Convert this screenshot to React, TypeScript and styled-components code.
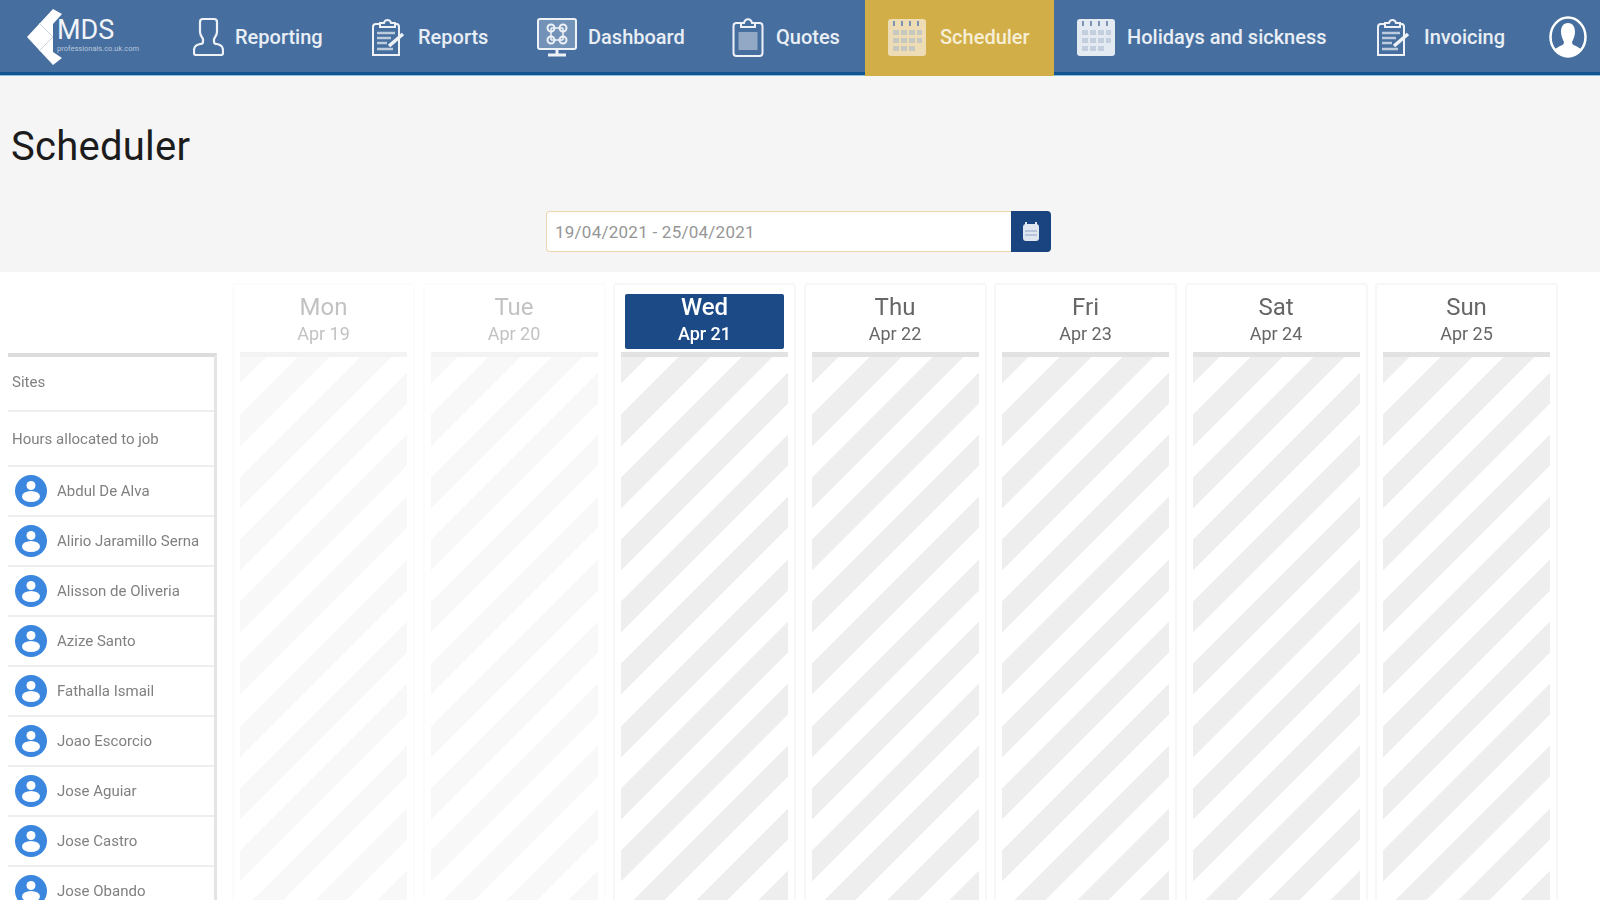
import React from "react";
import styled, { createGlobalStyle } from "styled-components";

const GlobalStyle = createGlobalStyle`
  html, body {
    margin: 0;
    height: 900px;
    overflow: hidden;
    background: #ffffff;
    font-family: Roboto, "Liberation Sans", sans-serif;
  }
  * {
    box-sizing: border-box;
  }
`;

const ReportingIcon = () => (
  <svg width="31" height="39" viewBox="0 0 31 39" fill="none" stroke="#eef2f7" strokeWidth="2.2">
    <path d="M10 2h11c2 0 3 1 3 3v10c0 3-2 5-3 7v3c0 1 1 2 3 2l3 1c2 1 3 3 3 5v3c0 2-1 2-2 2H3c-2 0-2-1-2-2v-3c0-2 1-4 3-5l3-1c2 0 3-1 3-2v-3c-1-2-3-4-3-7V5c0-2 1-3 3-3z" />
  </svg>
);

const ClipboardPenIcon = () => (
  <svg width="38" height="40" viewBox="0 0 38 40" fill="none" stroke="#eef2f7" strokeWidth="2">
    <path d="M10 7h18a3 3 0 0 1 2 3v28H4V10a3 3 0 0 1 3-3z" />
    <path d="M11 10V6h4c1-4 6-4 7 0h4v4z" fill="#466fa0" />
    <path d="M8 16h18M8 21h14M8 26h10M8 32h16" strokeWidth="2.5" opacity="0.7" />
    <path d="M20 29l14-12" strokeWidth="3.5" />
  </svg>
);

const DashboardIcon = () => (
  <svg width="40" height="40" viewBox="0 0 40 40" fill="none" stroke="#eef2f7" strokeWidth="2">
    <rect x="1" y="2" width="38" height="30" rx="2" fill="#c9d4e3" fillOpacity="0.35" />
    <path d="M20 32v5M11 38h18" strokeWidth="3" />
    <circle cx="14" cy="11" r="3.5" />
    <circle cx="26" cy="11" r="3.5" />
    <circle cx="14" cy="23" r="3.5" />
    <circle cx="26" cy="23" r="3.5" />
    <path d="M14 11h12M14 23h12M14 11v12M26 11v12" strokeWidth="1.5" />
  </svg>
);

const QuotesIcon = () => (
  <svg width="32" height="40" viewBox="0 0 32 40" fill="none" stroke="#eef2f7" strokeWidth="2">
    <rect x="1.5" y="6" width="29" height="33" rx="3" />
    <path d="M9 10V6h3c1-5 7-5 8 0h3v4z" fill="#466fa0" />
    <rect x="6.5" y="15" width="19" height="18" fill="#c4cfde" fillOpacity="0.6" stroke="none" />
  </svg>
);

const CalendarIcon = ({ fill }: { fill: string }) => (
  <svg width="40" height="40" viewBox="0 0 40 40">
    <rect x="1" y="2" width="38" height="37" rx="3" fill={fill} />
    <g fill="#a9b8cf" opacity="0.55">
      <rect x="6" y="13" width="6" height="5" />
      <rect x="14" y="13" width="6" height="5" />
      <rect x="22" y="13" width="6" height="5" />
      <rect x="30" y="13" width="5" height="5" />
      <rect x="6" y="21" width="6" height="5" />
      <rect x="14" y="21" width="6" height="5" />
      <rect x="22" y="21" width="6" height="5" />
      <rect x="30" y="21" width="5" height="5" />
      <rect x="6" y="29" width="6" height="5" />
      <rect x="14" y="29" width="6" height="5" />
      <rect x="22" y="29" width="6" height="5" />
    </g>
    <g fill="#7d93b5">
      <rect x="6" y="4" width="2" height="5" />
      <rect x="14" y="4" width="2" height="5" />
      <rect x="22" y="4" width="2" height="5" />
      <rect x="30" y="4" width="2" height="5" />
    </g>
  </svg>
);

const ProfileIcon = () => (
  <svg width="38" height="42" viewBox="0 0 38 42">
    <ellipse cx="19" cy="21" rx="17.5" ry="19.5" fill="none" stroke="#fff" strokeWidth="2.5" />
    <path
      d="M19 7c5 0 7 4 7 9 0 4-2 8-3 10 0 2 1 3 4 4l5 3c-3 5-8 7-13 7s-10-2-13-7l5-3c3-1 4-2 4-4-1-2-3-6-3-10 0-5 2-9 7-9z"
      fill="#fff"
    />
  </svg>
);

const AvatarIcon = () => (
  <svg width="32" height="32" viewBox="0 0 32 32">
    <circle cx="16" cy="16" r="16" fill="#3b86de" />
    <circle cx="16" cy="10.5" r="4.5" fill="#fff" />
    <ellipse cx="16" cy="21.5" rx="9" ry="5.5" fill="#fff" />
  </svg>
);

const navItems = [
  { label: "Reporting", icon: <ReportingIcon />, width: 176, slot: 42 },
  { label: "Reports", icon: <ClipboardPenIcon />, width: 168, slot: 49 },
  { label: "Dashboard", icon: <DashboardIcon />, width: 195, slot: 51 },
  { label: "Quotes", icon: <QuotesIcon />, width: 155, slot: 44 },
  { label: "Scheduler", icon: <CalendarIcon fill="#eedcb4" />, width: 189, slot: 53, active: true },
  { label: "Holidays and sickness", icon: <CalendarIcon fill="#e4eaf2" />, width: 298, slot: 51 },
  { label: "Invoicing", icon: <ClipboardPenIcon />, width: 170, slot: 50 },
];

const people = [
  "Abdul De Alva",
  "Alirio Jaramillo Serna",
  "Alisson de Oliveria",
  "Azize Santo",
  "Fathalla Ismail",
  "Joao Escorcio",
  "Jose Aguiar",
  "Jose Castro",
  "Jose Obando",
];

const days = [
  { name: "Mon", date: "Apr 19", past: true },
  { name: "Tue", date: "Apr 20", past: true },
  { name: "Wed", date: "Apr 21", today: true },
  { name: "Thu", date: "Apr 22" },
  { name: "Fri", date: "Apr 23" },
  { name: "Sat", date: "Apr 24" },
  { name: "Sun", date: "Apr 25" },
];

const App: React.FC = () => {
  return (
    <Page>
      <GlobalStyle />
      <Header>
        <Logo>
          <svg width="36" height="58" viewBox="0 0 36 58">
            <path d="M0 28L26 0l9 5-9 10v28l9 6-9 7z" fill="#fff" />
            <path d="M12 14l14 14M12 42l14-14" stroke="#c9d3e0" strokeWidth="1" />
          </svg>
          <LogoText>
            <LogoName>MDS</LogoName>
            <LogoTag>professionals.co.uk.com</LogoTag>
          </LogoText>
        </Logo>
        {navItems.map((item) => (
          <NavItem key={item.label} $width={item.width} $active={item.active}>
            <NavIcon $slot={item.slot}>{item.icon}</NavIcon>
            {item.label}
          </NavItem>
        ))}
        <Profile>
          <ProfileIcon />
        </Profile>
      </Header>

      <TopSection>
        <Title>Scheduler</Title>
        <DateRow>
          <DateInput>19/04/2021 - 25/04/2021</DateInput>
          <DateButton>
            <svg width="18" height="20" viewBox="0 0 18 20">
              <rect x="1" y="2" width="16" height="17" rx="3" fill="#dfe6f0" />
              <rect x="3" y="0" width="2" height="4" fill="#dfe6f0" />
              <rect x="13" y="0" width="2" height="4" fill="#dfe6f0" />
              <path d="M3 9h12M3 13h12" stroke="#8ea3c2" strokeWidth="1" />
            </svg>
          </DateButton>
        </DateRow>
      </TopSection>

      <Board>
        <Sidebar>
          <SideTable>
            <LabelRow>Sites</LabelRow>
            <LabelRow>Hours allocated to job</LabelRow>
            {people.map((name) => (
              <PersonRow key={name}>
                <AvatarIcon />
                {name}
              </PersonRow>
            ))}
          </SideTable>
        </Sidebar>
        <Days>
          {days.map((day) => (
            <DayCard key={day.name} $past={day.past}>
              <DayHead $today={day.today}>
                <DayName>{day.name}</DayName>
                <DayDate>{day.date}</DayDate>
              </DayHead>
              <DayBody />
            </DayCard>
          ))}
        </Days>
      </Board>
    </Page>
  );
};

const Page = styled.div`
  width: 1600px;
  height: 900px;
  overflow: hidden;
  filter: blur(0.7px);
`;

const Header = styled.header`
  display: flex;
  height: 76px;
  background: #466fa0;
  border-bottom: 1px solid #8fbfe6;
  box-shadow: inset 0 -3px 0 #10558f;
`;

const Logo = styled.div`
  display: flex;
  flex: none;
  width: 171px;
  padding: 9px 0 0 27px;
`;

const LogoText = styled.div`
  display: flex;
  flex-direction: column;
  margin-left: -6px;
`;

const LogoName = styled.span`
  color: #f1f4f8;
  font-size: 27px;
  font-weight: 400;
  line-height: 30px;
  margin-top: 6px;
`;

const LogoTag = styled.span`
  color: #b9c7da;
  font-size: 7.5px;
  line-height: 8px;
  white-space: nowrap;
`;

const NavItem = styled.div<{ $width: number; $active?: boolean }>`
  display: flex;
  align-items: center;
  flex: none;
  width: ${(p) => p.$width}px;
  height: 76px;
  padding: 0 0 3px 22px;
  background: ${(p) => (p.$active ? "#d1ae47" : "transparent")};
  color: ${(p) => (p.$active ? "#f7eed6" : "#e9eef5")};
  font-size: 20px;
  font-weight: 500;
  white-space: nowrap;
`;

const NavIcon = styled.span<{ $slot: number }>`
  display: flex;
  flex: none;
  width: ${(p) => p.$slot}px;
`;

const Profile = styled.div`
  display: flex;
  align-items: center;
  flex: none;
  margin-left: 27px;
  padding-bottom: 1px;
`;

const TopSection = styled.section`
  height: 196px;
  background: #f5f5f5;
  padding: 45px 0 0 11px;
`;

const Title = styled.h1`
  margin: 0;
  color: #1c1c1c;
  font-size: 40px;
  font-weight: 400;
  line-height: 52px;
  letter-spacing: 0.25px;
`;

const DateRow = styled.div`
  display: flex;
  width: 505px;
  height: 41px;
  margin: 38px 0 0 535px;
`;

const DateInput = styled.div`
  flex: 1;
  display: flex;
  align-items: center;
  padding-left: 8px;
  background: #fff;
  border: 1px solid #ead7b2;
  border-right: none;
  border-radius: 4px 0 0 4px;
  color: #969696;
  font-size: 17px;
  letter-spacing: 0.25px;
`;

const DateButton = styled.div`
  display: flex;
  align-items: center;
  justify-content: center;
  width: 40px;
  background: #1a4480;
  border-radius: 0 4px 4px 0;
`;

const Board = styled.section`
  display: flex;
  padding: 11px 0 0 8px;
`;

const Sidebar = styled.aside`
  flex: none;
  width: 209px;
  padding-top: 70px;
`;

const SideTable = styled.div`
  border-top: 4px solid #dcdcdc;
  border-right: 3px solid #e4e4e4;
`;

const LabelRow = styled.div`
  display: flex;
  align-items: center;
  height: 55px;
  padding-left: 4px;
  border-bottom: 2px solid #eeeeee;
  color: #808080;
  font-size: 15px;

  &:first-child {
    padding-bottom: 4px;
  }
`;

const PersonRow = styled.div`
  display: flex;
  align-items: center;
  gap: 10px;
  height: 50px;
  padding-left: 7px;
  border-bottom: 2px solid #eeeeee;
  color: #808080;
  font-size: 15px;
`;

const Days = styled.div`
  display: grid;
  grid-template-columns: repeat(7, 183px);
  column-gap: 7.5px;
  margin-left: 15px;
`;

const DayCard = styled.div<{ $past?: boolean }>`
  height: 700px;
  padding: 9px 6px 0;
  border: 2px solid #f7f7f7;
  border-radius: 4px 4px 0 0;
  opacity: ${(p) => (p.$past ? 0.4 : 1)};
`;

const DayHead = styled.div<{ $today?: boolean }>`
  display: flex;
  flex-direction: column;
  align-items: center;
  height: 55px;
  margin: 0 4px;
  background: ${(p) => (p.$today ? "#1b4a87" : "transparent")};
  color: ${(p) => (p.$today ? "#ffffff" : "#666666")};
  font-weight: ${(p) => (p.$today ? 500 : 400)};
  border-radius: 2px;
`;

const DayName = styled.span`
  font-size: 24px;
  line-height: 27px;
`;

const DayDate = styled.span`
  font-size: 18px;
  line-height: 25px;
`;

const DayBody = styled.div`
  height: 600px;
  margin-top: 3px;
  border-top: 5px solid #e2e2e2;
  background: repeating-linear-gradient(
    135deg,
    #eeeeee 0,
    #eeeeee 19px,
    #ffffff 19px,
    #ffffff 41px,
    #eeeeee 41px,
    #eeeeee 44px
  );
`;

export default App;
